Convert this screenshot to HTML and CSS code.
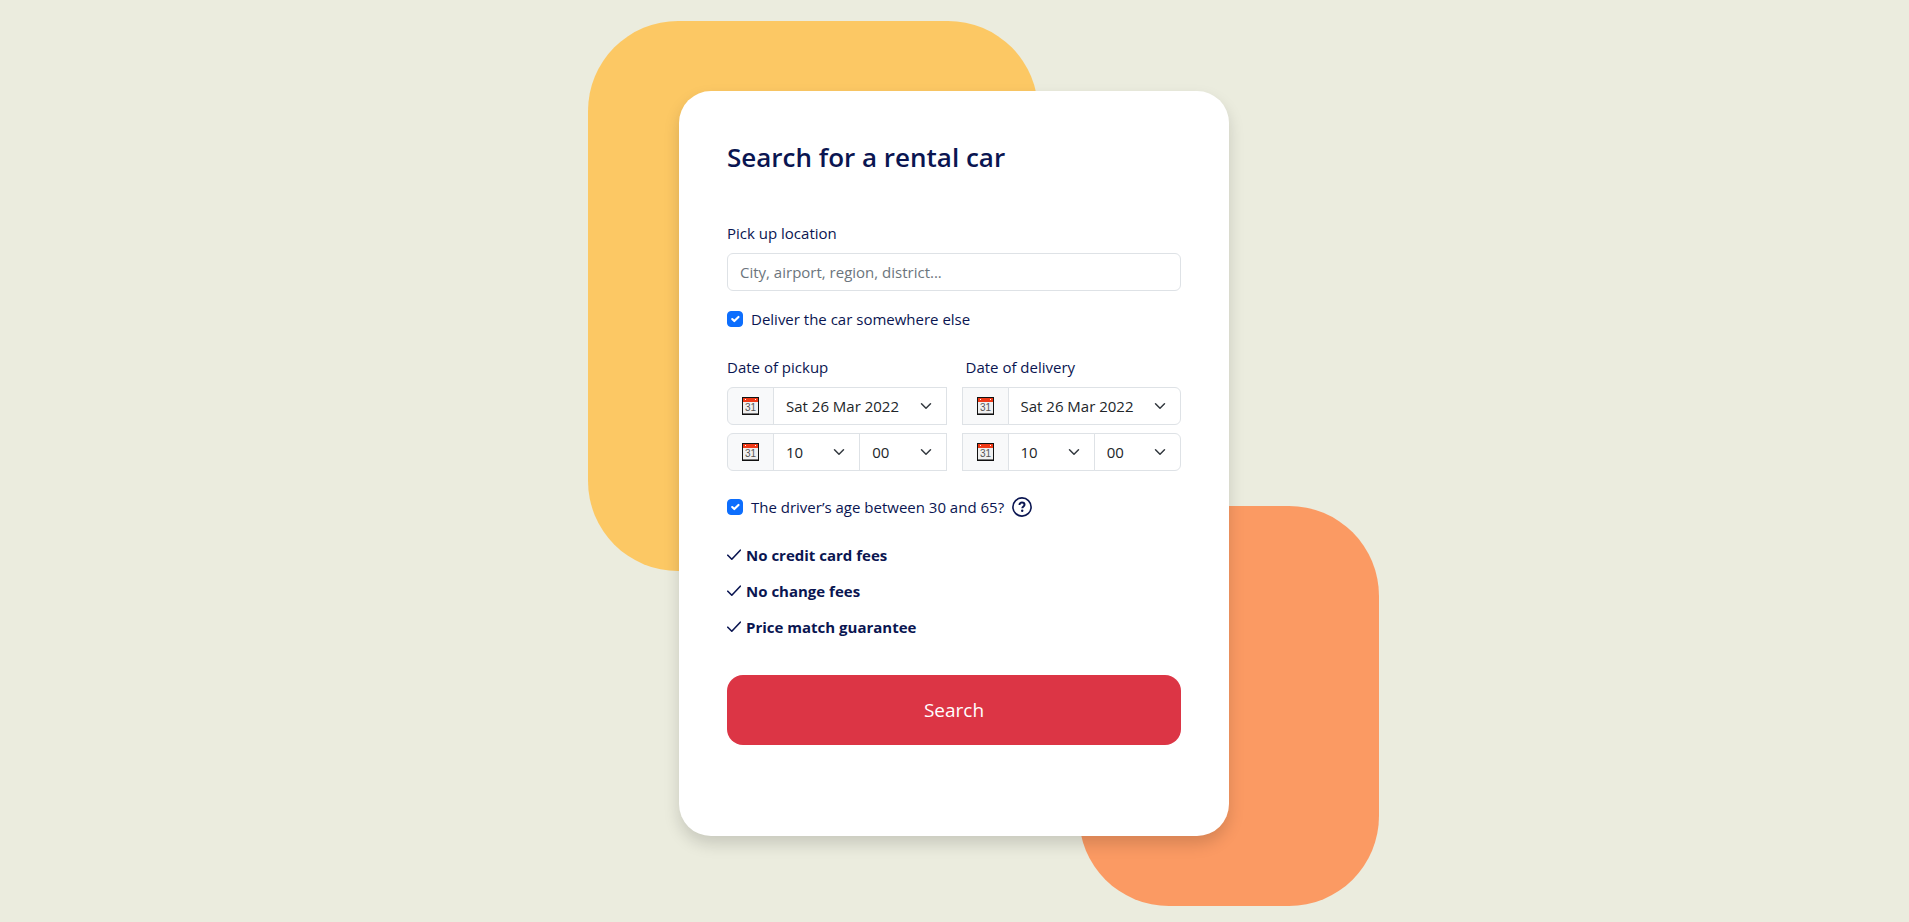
FILE: index.html
```html
<!DOCTYPE html>
<html lang="en">
<head>
<meta charset="utf-8">
<meta name="viewport" content="width=device-width, initial-scale=1">
<title>Search for a rental car</title>
<link rel="stylesheet" href="styles.css">
</head>
<body>
<svg class="sprite" aria-hidden="true">
  <symbol id="calendar" viewBox="0 0 17 18">
    <path d="M0 0h17v18H0z" fill="#111"/>
    <path d="M1 1h15v4H1z" fill="#f03a17"/>
    <path d="M1 5h15v11H1z" fill="#f0f0f0"/>
    <path d="M1 16h15v1H1z" fill="#777"/>
    <path d="M3 2h1v1H3zM13 2h1v1h-1z" fill="#fff"/>
  </symbol>
  <symbol id="tick" viewBox="0 0 14 12">
    <path d="M.8 6.2 4.8 10.2 13.3 1.2" fill="none" stroke="currentColor" stroke-width="1.6" stroke-linecap="round" stroke-linejoin="round"/>
  </symbol>
</svg>
<main class="page">
  <div class="stage">
    <div class="blob blob-yellow"></div>
    <div class="blob blob-orange"></div>
    <form class="card">
      <h2 class="title">Search for a rental car</h2>
      <label class="label" for="location">Pick up location</label>
      <input class="control" id="location" type="text" placeholder="City, airport, region, district...">
      <div class="check check-deliver">
        <input class="box" type="checkbox" id="deliver" checked>
        <label for="deliver">Deliver the car somewhere else</label>
      </div>
      <div class="dates">
        <div class="date date-first">
          <label class="label" for="pickup-date">Date of pickup</label>
          <div class="group">
            <span class="addon"><svg class="calendar" viewBox="0 0 17 18"><use href="#calendar"/><text x="8.5" y="14" text-anchor="middle" class="calendar-day">31</text></svg></span>
            <select class="select" id="pickup-date"><option>Sat 26 Mar 2022</option></select>
          </div>
          <div class="group">
            <span class="addon"><svg class="calendar" viewBox="0 0 17 18"><use href="#calendar"/><text x="8.5" y="14" text-anchor="middle" class="calendar-day">31</text></svg></span>
            <select class="select" aria-label="Pickup hour"><option>10</option></select>
            <select class="select" aria-label="Pickup minute"><option>00</option></select>
          </div>
        </div>
        <div class="date date-last">
          <label class="label" for="delivery-date">Date of delivery</label>
          <div class="group">
            <span class="addon"><svg class="calendar" viewBox="0 0 17 18"><use href="#calendar"/><text x="8.5" y="14" text-anchor="middle" class="calendar-day">31</text></svg></span>
            <select class="select" id="delivery-date"><option>Sat 26 Mar 2022</option></select>
          </div>
          <div class="group">
            <span class="addon"><svg class="calendar" viewBox="0 0 17 18"><use href="#calendar"/><text x="8.5" y="14" text-anchor="middle" class="calendar-day">31</text></svg></span>
            <select class="select" aria-label="Delivery hour"><option>10</option></select>
            <select class="select" aria-label="Delivery minute"><option>00</option></select>
          </div>
        </div>
      </div>
      <div class="check check-age">
        <input class="box" type="checkbox" id="age" checked>
        <label for="age">The driver’s age between 30 and 65?</label>
        <svg class="help" viewBox="0 0 20 20" role="img" aria-label="Help">
          <circle cx="10" cy="10" r="9.1" fill="none" stroke="currentColor" stroke-width="1.6"/>
          <path d="M7.5 7.9C7.5 6.4 8.6 5.5 10 5.5s2.5.9 2.5 2.2c0 1.7-2.2 1.8-2.2 3.6" fill="none" stroke="currentColor" stroke-width="2"/>
          <circle cx="10.2" cy="13.7" r="1.2" fill="currentColor"/>
        </svg>
      </div>
      <ul class="perks">
        <li><svg class="tick"><use href="#tick"/></svg>No credit card fees</li>
        <li><svg class="tick"><use href="#tick"/></svg>No change fees</li>
        <li><svg class="tick"><use href="#tick"/></svg>Price match guarantee</li>
      </ul>
      <button class="submit" type="submit">Search</button>
    </form>
  </div>
</main>
</body>
</html>
```
FILE: styles.css
```css
*, *::before, *::after { box-sizing: border-box; }
body {
  margin: 0;
  background: #ebecde;
  color: #0a1551;
  font: 400 15px/24px "Open Sans", "Noto Sans", sans-serif;
}
.sprite { display: block; width: 0; height: 0; }
.page {
  display: flex;
  justify-content: center;
  min-height: 100vh;
  padding: 91px 17px 86px 16px;
  overflow: hidden;
}
.stage { position: relative; width: 100%; max-width: 550px; }

/* Decorative shapes behind the card */
.blob { position: absolute; border-radius: 90px; }
.blob-yellow { left: -91px; top: -70px; width: 450px; height: 550px; background: #fcc864; }
.blob-orange { right: -150px; bottom: -70px; width: 300px; height: 400px; background: #fb9a63; }

.card {
  position: relative;
  display: flex;
  flex-direction: column;
  padding: 48px 48px 91px;
  background: #fff;
  border-radius: 32px;
  box-shadow: 0 8px 16px rgba(0, 0, 0, .15);
}
.title { margin: 0 0 46px; font-size: 26px; line-height: 36px; font-weight: 600; }
.label { display: block; margin-bottom: 8px; }

.control, .select {
  height: 38px;
  border: 1px solid #dee2e6;
  background-color: #fff;
  color: #212529;
  font: inherit;
  outline: 0;
}
.control { width: 100%; padding: 6px 12px; border-radius: 6px; }
.control::placeholder { color: #6c757d; opacity: 1; }

.check { display: flex; align-items: center; gap: 8px; }
.check-deliver { margin: 16px 0 24px; }
.check-age { margin: 24px 0; }
.box {
  appearance: none;
  width: 16px;
  height: 16px;
  margin: 0;
  border-radius: 4px;
  border: 1px solid #bfc4ca;
}
.box:checked {
  border-color: #0d6efd;
  background: #0d6efd url("data:image/svg+xml,%3Csvg xmlns='http://www.w3.org/2000/svg' viewBox='0 0 20 20'%3E%3Cpath fill='none' stroke='%23fff' stroke-linecap='round' stroke-linejoin='round' stroke-width='3' d='m6 10 3 3 6-6'/%3E%3C/svg%3E") center / contain no-repeat;
}
.help { width: 20px; height: 20px; }

.dates { display: grid; grid-template-columns: 1fr 1fr; gap: 15px; }
.date-last .label { padding-left: 4px; }
.group { display: flex; }
.group + .group { margin-top: 8px; }
.addon {
  display: flex;
  align-items: center;
  justify-content: center;
  width: 47px;
  flex: none;
  border: 1px solid #dee2e6;
  background: #f8f9fa;
}
.calendar { width: 17px; height: 18px; }
.calendar-day { font: 10px "Liberation Sans", sans-serif; fill: #555; }
.select {
  appearance: none;
  flex: 1 1 0;
  min-width: 0;
  margin: 0 0 0 -1px;
  padding: 6px 36px 6px 12px;
  border-radius: 0;
  background-image: url("data:image/svg+xml,%3Csvg xmlns='http://www.w3.org/2000/svg' viewBox='0 0 16 16'%3E%3Cpath fill='none' stroke='%23343a40' stroke-linecap='round' stroke-linejoin='round' stroke-width='2' d='m2 5 6 6 6-6'/%3E%3C/svg%3E");
  background-repeat: no-repeat;
  background-position: right 12px center;
  background-size: 16px 12px;
}
.date-first .addon { border-radius: 6px 0 0 6px; }
.date-last .select:last-child { border-radius: 0 6px 6px 0; }

.perks {
  display: flex;
  flex-direction: column;
  gap: 12px;
  margin: 0 0 36px;
  padding: 0;
  list-style: none;
  font-weight: 700;
}
.perks li { display: flex; align-items: center; gap: 5px; }
.tick { width: 14px; height: 12px; }

.submit {
  height: 70px;
  border: 0;
  border-radius: 16px;
  background: #dc3545;
  color: #fff;
  font: inherit;
  font-size: 19px;
}
```
